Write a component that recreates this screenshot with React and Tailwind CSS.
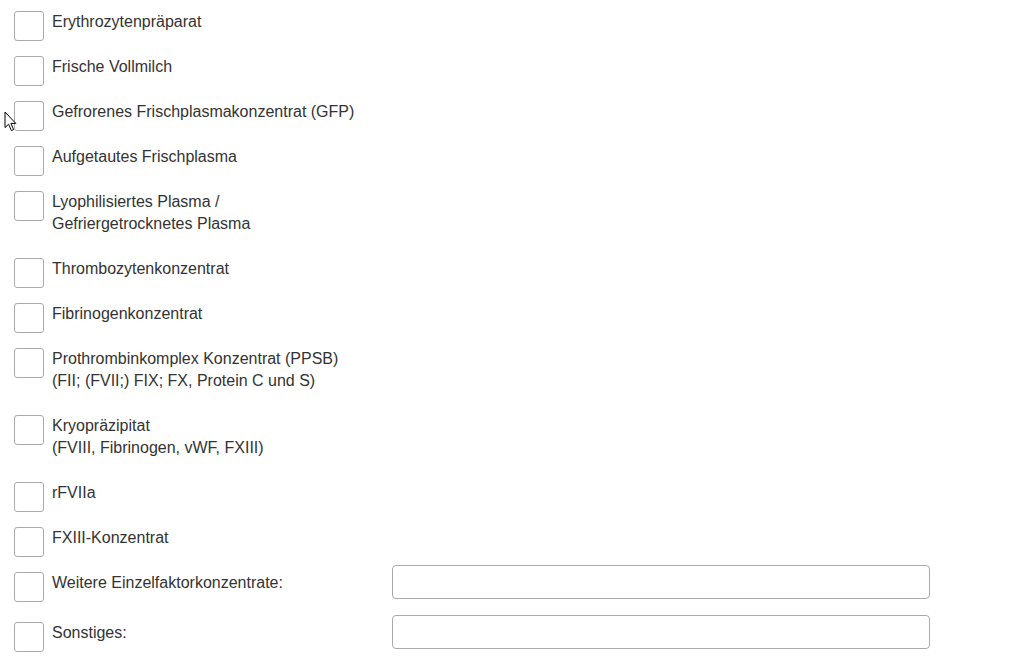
const ITEMS = [
  { label: ['Erythrozytenpräparat'] },
  { label: ['Frische Vollmilch'] },
  { label: ['Gefrorenes Frischplasmakonzentrat (GFP)'] },
  { label: ['Aufgetautes Frischplasma'] },
  { label: ['Lyophilisiertes Plasma /', 'Gefriergetrocknetes Plasma'] },
  { label: ['Thrombozytenkonzentrat'] },
  { label: ['Fibrinogenkonzentrat'] },
  { label: ['Prothrombinkomplex Konzentrat (PPSB)', '(FII; (FVII;) FIX; FX, Protein C und S)'] },
  { label: ['Kryopräzipitat', '(FVIII, Fibrinogen, vWF, FXIII)'] },
  { label: ['rFVIIa'] },
  { label: ['FXIII-Konzentrat'] },
  { label: ['Weitere Einzelfaktorkonzentrate:'], input: true },
  { label: ['Sonstiges:'], input: true },
]

function Cursor() {
  return (
    <svg className="absolute left-[4px] top-[111px]" width="14" height="21" viewBox="0 0 14 21">
      <path
        d="M1 1 L1 16.5 L4.6 13.2 L7.4 19.6 L9.6 18.6 L6.9 12.4 L11.8 12.4 Z"
        fill="#fff"
        stroke="#000"
        strokeWidth="1"
        strokeLinejoin="miter"
      />
    </svg>
  )
}

function Row({ item }) {
  return (
    <div className="flex items-start mb-[14px]">
      <input
        type="checkbox"
        className="appearance-none w-[30px] h-[30px] shrink-0 bg-white border border-[#aaaaaa] rounded-[3px]"
      />
      <div
        className={
          'ml-[8px] pb-[9px] text-[16px] leading-[22px] text-[#333333] ' +
          (item.input ? 'w-[340px] shrink-0' : '')
        }
      >
        {item.label.map((line) => (
          <div key={line}>{line}</div>
        ))}
      </div>
      {item.input && (
        <input
          type="text"
          className="-mt-[7px] mb-[9px] w-[538px] h-[34px] bg-white border border-[#aaaaaa] rounded-[4px] px-2"
        />
      )}
    </div>
  )
}

export default function App() {
  return (
    <div
      className="relative w-[1021px] h-[663px] overflow-hidden bg-white pt-[11px] pl-[14px]"
      style={{ fontFamily: '"Liberation Sans", Arial, sans-serif' }}
    >
      {ITEMS.map((item) => (
        <Row key={item.label[0]} item={item} />
      ))}
      <Cursor />
    </div>
  )
}
